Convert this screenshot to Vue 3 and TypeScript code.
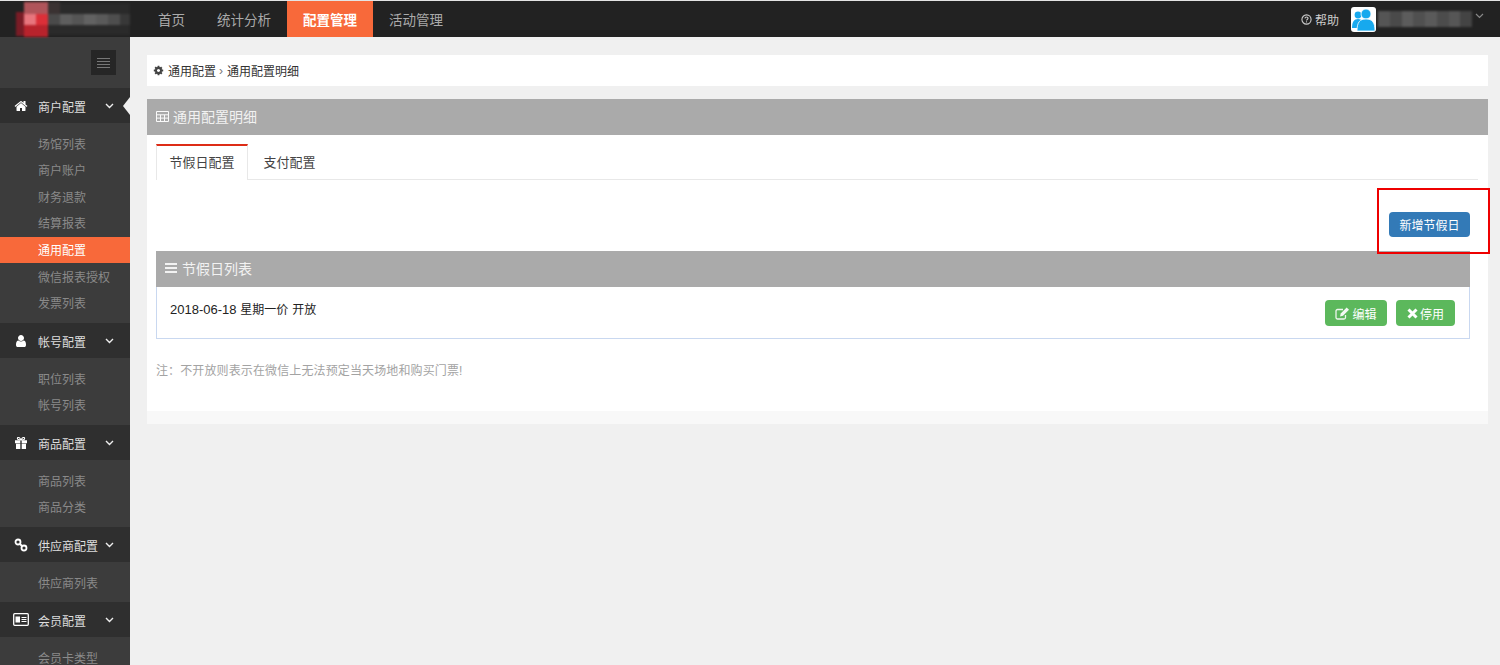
<script setup lang="ts">
interface Group { title: string; icon: string; items: string[] }
const groups: Group[] = [
  { title: '商户配置', icon: 'home', items: ['场馆列表', '商户账户', '财务退款', '结算报表', '通用配置', '微信报表授权', '发票列表'] },
  { title: '帐号配置', icon: 'user', items: ['职位列表', '帐号列表'] },
  { title: '商品配置', icon: 'gift', items: ['商品列表', '商品分类'] },
  { title: '供应商配置', icon: 'link', items: ['供应商列表'] },
  { title: '会员配置', icon: 'card', items: ['会员卡类型'] },
]
const navs = ['首页', '统计分析', '配置管理', '活动管理']
const logoCells = [
  { x: 32, y: 1, w: 84, h: 32, c: '#2a2a2a' },
  { x: 0, y: 10, w: 8, h: 24, c: '#7a1c26' }, { x: 8, y: 0, w: 24, h: 12, c: '#b0545a' },
  { x: 8, y: 12, w: 12, h: 11, c: '#e8757d' }, { x: 20, y: 12, w: 12, h: 11, c: '#dc2f38' },
  { x: 8, y: 23, w: 24, h: 12, c: '#b8232c' }, { x: 32, y: 0, w: 12, h: 12, c: '#3a3232' },
  { x: 32, y: 12, w: 12, h: 11, c: '#4a4a4a' }, { x: 44, y: 12, w: 12, h: 11, c: '#5e5e5e' },
  { x: 56, y: 12, w: 12, h: 11, c: '#555' }, { x: 68, y: 12, w: 12, h: 11, c: '#626262' },
  { x: 80, y: 12, w: 12, h: 11, c: '#5a5a5a' }, { x: 92, y: 12, w: 12, h: 11, c: '#4e4e4e' },
  { x: 104, y: 12, w: 12, h: 11, c: '#383838' },
]
const nameCells = ['#555', '#4a4a4a', '#5c5c5c', '#505050', '#5a5a5a', '#4c4c4c', '#565656', '#444']
</script>

<template>
  <div class="page">
    <header class="topbar">
      <div class="logo">
        <svg width="130" height="36" viewBox="0 0 130 36">
          <rect v-for="(c, i) in logoCells" :key="i" :x="c.x + 16" :y="c.y + 1" :width="c.w" :height="c.h" :fill="c.c" />
        </svg>
      </div>
      <nav class="nav">
        <a v-for="n in navs" :key="n" class="nav-item" :class="{ active: n === '配置管理' }">{{ n }}</a>
      </nav>
      <div class="top-right">
        <span class="help">
          <svg class="ic" width="11" height="11" viewBox="0 0 12 12"><circle cx="6" cy="6" r="5" fill="none" stroke="#ccc" stroke-width="1.2" /><path d="M4.300 4.800C4.400 3.800 5.100 3.300 6 3.300c1 0 1.700.6 1.700 1.400 0 1.300-1.700 1.200-1.700 2.500" fill="none" stroke="#ccc" stroke-width="1.200" /><rect x="5.400" y="8" width="1.200" height="1.200" fill="#ccc" /></svg>
          帮助
        </span>
        <span class="avatar">
          <svg width="25" height="25" viewBox="0 0 25 25">
            <circle cx="7" cy="8" r="3.400" fill="#17a9ee" />
            <path d="M1 21c0-6 2-9 6-9s5 3 5 9z" fill="#17a9ee" />
            <circle cx="15" cy="7" r="5" fill="#17a9ee" stroke="#fff" stroke-width=".8" />
            <path d="M6 24c0-9 3-12 9-12s9 3 9 12z" fill="#17a9ee" stroke="#fff" stroke-width=".8" />
          </svg>
        </span>
        <span class="name"><i v-for="(c, i) in nameCells" :key="i" :style="{ background: c }"></i></span>
        <svg class="name-caret" width="9" height="6" viewBox="0 0 9 6"><path d="M1 1l3.500 3.500L8 1" fill="none" stroke="#888" stroke-width="1.200" /></svg>
      </div>
    </header>

    <div class="shell">
      <aside class="sidebar">
        <div class="toggle-row">
          <span class="toggle"><i></i><i></i><i></i><i></i></span>
        </div>
        <section v-for="(g, gi) in groups" :key="g.title">
          <div class="group-head">
            <span class="g-icon">
              <svg v-if="g.icon === 'home'" width="14" height="14" viewBox="0 0 1792 1792"><path fill="#fff" d="M1472 992v480q0 26-19 45t-45 19h-384v-384h-256v384h-384q-26 0-45-19t-19-45v-480q0-1 .5-3t.5-3l575-474 575 474q1 2 1 6zm223-69l-62 74q-8 9-21 11h-3q-13 0-21-7l-692-577-692 577q-12 8-24 7-13-2-21-11l-62-74q-8-10-7-23.500t11-21.500l719-599q32-26 76-26t76 26l244 204v-195q0-14 9-23t23-9h192q14 0 23 9t9 23v408l219 182q10 8 11 21.500t-7 23.500z" /></svg>
              <svg v-else-if="g.icon === 'user'" width="14" height="14" viewBox="0 0 1792 1792"><path fill="#fff" d="M1536 1399q0 109-62.500 187t-150.500 78h-854q-88 0-150.500-78t-62.500-187q0-85 8.500-160.500t31.500-152 58.500-131 94-89 134.500-34.500q131 128 313 128t313-128q76 0 134.500 34.500t94 89 58.500 131 31.500 152 8.500 160.500zm-256-887q0 159-112.500 271.500t-271.500 112.500-271.500-112.500-112.500-271.500 112.500-271.500 271.500-112.500 271.500 112.500 112.500 271.500z" /></svg>
              <svg v-else-if="g.icon === 'gift'" width="12" height="12" viewBox="0 0 12 12"><path fill="#fff" d="M0 3.200h5.300v3H0zM6.700 3.200H12v3H6.700zM1 6.800h4.300V12H1zM6.700 6.800H11V12H6.700z" /><path d="M5.800 3C3.800 3 2.400 2.400 2.400 1.400 2.400.5 3.200.3 3.900.6c.9.400 1.600 1.400 1.900 2.400zM6.200 3c2 0 3.400-.6 3.400-1.600 0-.9-.8-1.100-1.500-.8-.9.400-1.600 1.400-1.900 2.400z" fill="none" stroke="#fff" stroke-width="1.100" /></svg>
              <svg v-else-if="g.icon === 'link'" width="14" height="14" viewBox="0 0 14 14"><circle cx="4" cy="4" r="2.500" fill="none" stroke="#fff" stroke-width="1.800" /><circle cx="10" cy="10" r="2.500" fill="none" stroke="#fff" stroke-width="1.800" /><path d="M6 6l2 2" stroke="#fff" stroke-width="1.800" /></svg>
              <svg v-else width="16" height="13" viewBox="0 0 16 13"><rect x=".7" y=".7" width="14.600" height="11.600" rx="1" fill="none" stroke="#fff" stroke-width="1.300" /><rect x="2.500" y="3.500" width="4.500" height="6" fill="#fff" /><path d="M8.500 4.500h5M8.500 6.500h5M8.500 8.500h5" stroke="#fff" /></svg>
            </span>
            <span class="g-title">{{ g.title }}</span>
            <svg class="chev" width="9" height="6" viewBox="0 0 9 6"><path d="M1 1l3.500 3.500L8 1" fill="none" stroke="#eee" stroke-width="1.400" /></svg>
            <span v-if="gi === 0" class="caret"></span>
          </div>
          <ul class="sub">
            <li v-for="it in g.items" :key="it" :class="{ current: it === '通用配置' }">{{ it }}</li>
          </ul>
        </section>
      </aside>

      <main class="main">
        <div class="crumb">
          <svg width="11" height="11" viewBox="0 0 1792 1792"><path fill="#444" d="M1152 896q0-106-75-181t-181-75-181 75-75 181 75 181 181 75 181-75 75-181zm512-109v222q0 12-8 23t-20 13l-185 28q-19 54-39 91 35 50 107 138 10 12 10 25t-9 23q-27 37-99 108t-94 71q-12 0-26-9l-138-108q-44 23-91 38-16 136-29 186-7 28-36 28h-222q-14 0-24.500-8.500t-11.500-21.500l-28-184q-49-16-90-37l-141 107q-10 9-25 9-14 0-25-11-126-114-165-168-7-10-7-23 0-12 8-23 15-21 51-66.500t54-70.500q-27-50-41-99l-183-27q-13-2-21-12.500t-8-23.500v-222q0-12 8-23t19-13l186-28q14-46 39-92-40-57-107-138-10-12-10-24 0-10 9-23 26-36 98.500-107.500t94.500-71.500q13 0 26 10l138 107q44-23 91-38 16-136 29-186 7-28 36-28h222q14 0 24.500 8.500t11.500 21.500l28 184q49 16 90 37l142-107q9-9 24-9 13 0 25 10 129 119 165 170 7 8 7 22 0 12-8 23-15 21-51 66.500t-54 70.500q26 50 41 98l183 28q13 2 21 12.500t8 23.500z" /></svg>
          <span class="crumb-first">通用配置</span><span class="sep">›</span><span>通用配置明细</span>
        </div>

        <div class="panel">
          <div class="panel-head">
            <svg width="13" height="11" viewBox="0 0 13 11"><path d="M.5.500h12v10H.5zM.5 3.800h12M.5 7.100h12M4.500 3.800v6.700M8.500 3.800v6.700" fill="none" stroke="#fafafa" /></svg>
            <span>通用配置明细</span>
          </div>
          <div class="panel-body">
            <div class="tabs">
              <span class="tab active">节假日配置</span>
              <span class="tab">支付配置</span>
            </div>
            <div class="actions">
              <button class="btn primary">新增节假日</button>
              <span class="mark"></span>
            </div>
            <div class="list">
              <div class="list-head">
                <svg width="12" height="10" viewBox="0 0 12 10"><path d="M0 1h12M0 5h12M0 9h12" stroke="#f2f2f2" stroke-width="2" /></svg>
                <span>节假日列表</span>
              </div>
              <div class="list-row">
                <span class="row-text"><span class="row-date">2018-06-18</span> 星期一价 开放</span>
                <div class="row-btns">
                  <button class="btn success edit">
                    <svg width="15" height="13" viewBox="0 0 15 13"><path d="M10.500 8v2.500a1.500 1.500 0 0 1-1.500 1.500H2.500A1.500 1.500 0 0 1 1 10.500V4a1.500 1.500 0 0 1 1.500-1.500H8" fill="none" stroke="#eef5ee" stroke-width="1.300" /><path d="M5 9.500l.7-3L11.700.5l2.300 2.300-6 6z" fill="#f4f8f4" /></svg>
                    编辑
                  </button>
                  <button class="btn success stop">
                    <svg width="11" height="11" viewBox="0 0 11 11"><path d="M1.500 1.500l8 8M9.500 1.500l-8 8" stroke="#fff" stroke-width="3" /></svg>
                    停用
                  </button>
                </div>
              </div>
            </div>
            <p class="note">注：不开放则表示在微信上无法预定当天场地和购买门票!</p>
          </div>
          <div class="panel-foot"></div>
        </div>
      </main>
    </div>
  </div>
</template>

<style>
html, body { margin: 0; height: 100%; overflow: hidden; }
</style>

<style scoped>
.page {
  height: 665px;
  display: flex;
  flex-direction: column;
  background: #f0f0f0;
  overflow: hidden;
  font-family: "Liberation Sans", "Noto Sans CJK SC", sans-serif;
  font-size: 12px;
  color: #333;
}
.topbar {
  height: 36px;
  border-top: 1px solid #e4e4e4;
  background: #222;
  display: flex;
  align-items: stretch;
  flex: none;
}
.logo { width: 130px; height: 36px; overflow: hidden; filter: blur(1px); flex: none; }
.nav { display: flex; margin-left: 12px; }
.nav-item {
  padding: 1.500px 16px 0;
  line-height: 36px;
  height: 36px;
  box-sizing: border-box;
  font-size: 13.500px;
  color: #aaa;
}
.nav-item.active {
  background: #f8693a;
  color: #fff;
  font-weight: 700;
}
.top-right { margin-left: auto; display: flex; align-items: center; padding-right: 16px; }
.help { display: flex; align-items: center; gap: 3px; color: #ccc; margin-right: 12px; }
.avatar {
  width: 25px;
  height: 25px;
  background: #fff;
  border-radius: 3px;
  overflow: hidden;
  display: block;
}
.avatar svg { display: block; }
.name { display: flex; height: 16px; filter: blur(1px); margin-left: 2px; }
.name i { width: 11.750px; display: block; }
.name-caret { margin-left: 3px; margin-top: -6px; }
.shell { flex: 1; display: flex; min-height: 0; }
.sidebar {
  width: 130px;
  flex: none;
  background: #3c3c3c;
  overflow: hidden;
}
.toggle-row { height: 51px; display: flex; justify-content: flex-end; align-items: flex-start; padding: 13px 14px 0 0; box-sizing: border-box; }
.toggle {
  width: 25px;
  height: 25px;
  background: #262626;
  display: flex;
  flex-direction: column;
  align-items: center;
  justify-content: center;
  gap: 2px;
}
.toggle i { width: 13px; height: 1px; background: #777; display: block; }
.group-head {
  height: 35px;
  background: #2f2f2f;
  display: flex;
  align-items: center;
  color: #ddd;
  position: relative;
}
.g-icon { width: 38px; flex: none; display: flex; justify-content: center; padding-left: 6px; box-sizing: border-box; }
.g-icon svg { display: block; margin-left: -2px; }
.g-title { width: 67px; flex: none; white-space: nowrap; padding-top: 2px; }
.chev { flex: none; }
.caret {
  position: absolute;
  right: 0;
  top: 9px;
  width: 0;
  height: 0;
  border: 9px solid transparent;
  border-left-width: 0;
  border-right: 7px solid #f0f0f0;
}
.sub { list-style: none; margin: 0; padding: 7px 0 6.600px; }
.sub li {
  height: 26.670px;
  line-height: 26.670px;
  padding-left: 38px;
  padding-top: 1.500px;
  box-sizing: border-box;
  color: #8a8a8a;
  white-space: nowrap;
}
.sub li.current { background: #f8693a; color: #fff; }
.main { flex: 1; min-width: 0; padding: 18px 12px 0 17px; }
.crumb {
  height: 31px;
  background: #fff;
  display: flex;
  align-items: center;
  padding-left: 6px;
  gap: 3px;
  color: #333;
}
.crumb-first { margin-left: 1px; }
.crumb .sep { color: #777; margin-right: 1px; }
.panel { margin-top: 13px; }
.panel-head {
  height: 36px;
  background: #aaa;
  color: #f2f2f2;
  font-size: 14px;
  display: flex;
  align-items: center;
  gap: 4px;
  padding: 0 0 2px 9px;
  box-sizing: border-box;
}
.panel-body { background: #fff; padding: 9px 18px 0 9px; height: 267px; box-sizing: content-box; }
.tabs { display: flex; height: 36px; border-bottom: 1px solid #e8e8e8; box-sizing: border-box; margin-right: -8px; }
.tab {
  width: 92px;
  font-size: 13px;
  text-align: center;
  line-height: 38px;
  height: 36px;
  color: #444;
  box-sizing: border-box;
  margin-right: 1px;
}
.tab:nth-child(2) { width: 81px; }
.tab.active {
  border-top: 2px solid #dd2c16;
  border-left: 1px solid #e8e8e8;
  border-right: 1px solid #e8e8e8;
  background: #fff;
  line-height: 34px;
}
.actions { height: 71px; display: flex; justify-content: flex-end; align-items: flex-start; padding-top: 32px; box-sizing: border-box; position: relative; }
.mark {
  position: absolute;
  right: -20px;
  top: 8px;
  width: 113px;
  height: 66px;
  border: 2px solid #e00;
  box-sizing: border-box;
}
.btn {
  border: 0;
  border-radius: 4px;
  font-family: inherit;
  font-size: 12px;
  color: #fff;
  display: inline-flex;
  align-items: center;
  justify-content: center;
  padding: 0;
}
.btn.primary { background: #337ab7; width: 81px; height: 25px; }
.btn.success { background: #5cb85c; height: 26px; gap: 2px; }
.btn.edit { width: 62px; }
.btn.stop { width: 59px; margin-left: 9px; }
.list { border: 1px solid #c9d8f0; border-top: 0; }
.list-head {
  height: 36px;
  background: #aaa;
  color: #f2f2f2;
  font-size: 14px;
  display: flex;
  align-items: center;
  gap: 5px;
  padding: 0 0 2px 9px;
  box-sizing: border-box;
  margin: 0 -1px;
}
.list-row { height: 51px; display: flex; align-items: flex-start; justify-content: space-between; padding: 13px 14px 0 13px; box-sizing: border-box; }
.row-text { font-size: 12px; color: #222; line-height: 18px; margin-top: 1px; word-spacing: .5px; }
.row-date { font-size: 13px; }
.row-btns { display: flex; }
.note { margin: 24px 0 0; color: #a3a3a3; line-height: 16px; letter-spacing: .12px; }
.panel-foot { height: 13px; background: #f8f8f8; }
</style>
